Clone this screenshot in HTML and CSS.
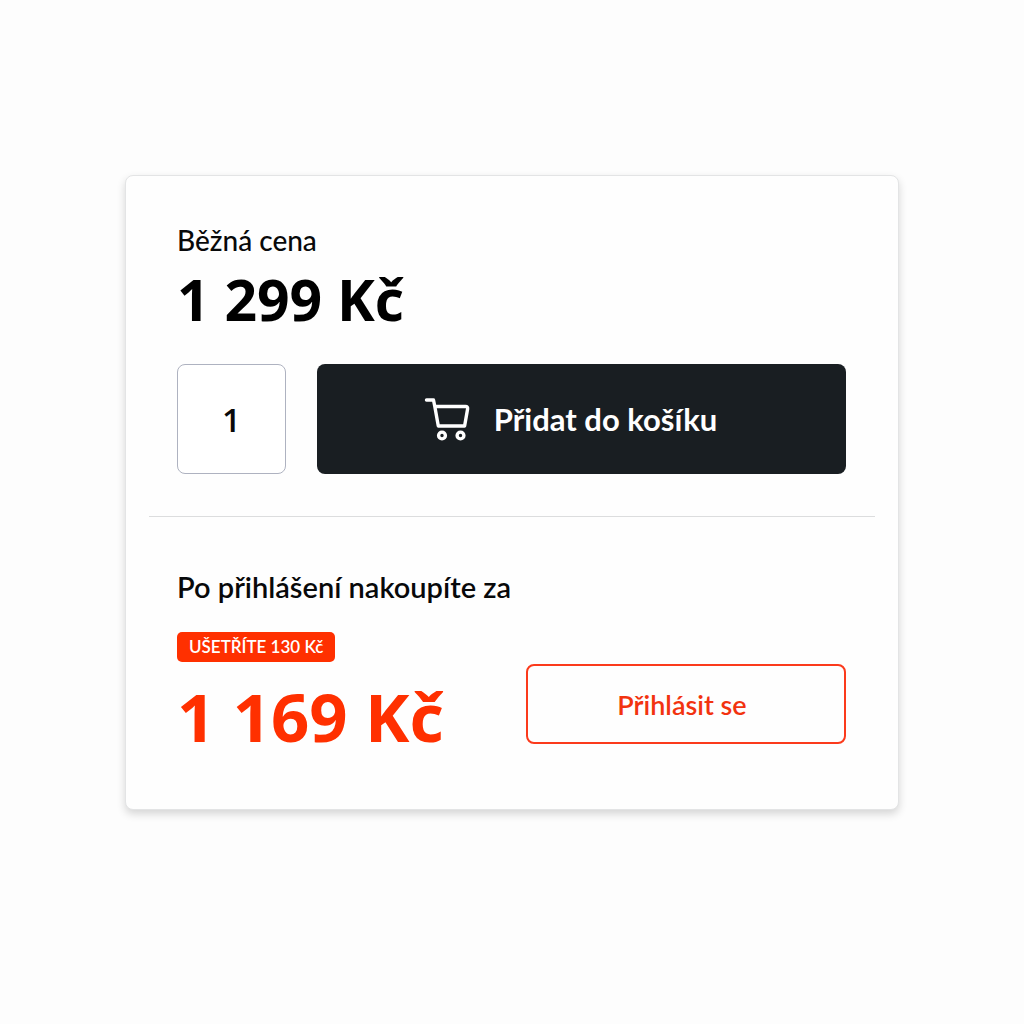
FILE: index.html
```html
<!DOCTYPE html>
<html lang="cs">
<head>
<meta charset="UTF-8">
<meta name="viewport" content="width=device-width, initial-scale=1.0">
<title>Cena</title>
<link rel="stylesheet" href="styles.css">
</head>
<body>
<div class="card">
    <div class="regular">
        <label class="label label-regular" for="quantity">Běžná cena</label>
        <div class="price">1 299 Kč</div>
        <div class="buy">
            <input class="quantity" id="quantity" type="text" inputmode="numeric" value="1">
            <button class="add" type="button">
                <svg class="cart" viewBox="0 0 46 46" fill="none" stroke="currentColor" stroke-width="3.4" stroke-linecap="round" stroke-linejoin="round">
                    <path d="M2.5 4H9.5L10.8 10.5M10.8 10.5H41.5Q44 10.5 43.6 13L40.6 30H14.3Z"/>
                    <circle cx="18" cy="39.5" r="3.4"/>
                    <circle cx="36.5" cy="39.5" r="3.4"/>
                </svg>
                <span>Přidat do košíku</span>
            </button>
        </div>
    </div>
    <hr class="divider">
    <div class="label">Po přihlášení nakoupíte za</div>
    <div class="member">
        <div class="offer">
            <span class="badge">UŠETŘÍTE 130 Kč</span>
            <div class="price price-member">1 169 Kč</div>
        </div>
        <button class="login" type="button">Přihlásit se</button>
    </div>
</div>
</body>
</html>
```
FILE: styles.css
```css
* {
    box-sizing: border-box;
}

body {
    margin: 0;
    padding: 175px 125px;
    background-color: #fdfdfd;
    color: #08090a;
    font-family: Lato, "Open Sans", sans-serif;
}

.card {
    padding: 48px 52px 65px 51px;
    background-color: #fefefe;
    border: 1px solid #e3e4e5;
    border-radius: 8px;
    box-shadow: 0 4px 8px rgba(0, 0, 0, 0.16);
}

.label {
    display: block;
    font-size: 29px;
    font-weight: 600;
    line-height: 32px;
}

.label-regular {
    font-size: 28px;
    font-weight: 500;
}

.price {
    margin-top: 19px;
    color: #000;
    font-family: "Open Sans", Lato, sans-serif;
    font-size: 57px;
    font-weight: 700;
    line-height: 48px;
    white-space: nowrap;
}

.buy {
    display: flex;
    gap: 31px;
    margin-top: 41px;
}

.quantity {
    width: 109px;
    height: 110px;
    padding: 0;
    background-color: #fff;
    border: 1px solid #aeb2c0;
    border-radius: 8px;
    color: inherit;
    font-family: "Open Sans", Lato, sans-serif;
    font-size: 33px;
    font-weight: 600;
    text-align: center;
}

.add {
    display: flex;
    flex: 1;
    align-items: center;
    justify-content: center;
    gap: 24px;
    height: 110px;
    padding: 0 22px 0 0;
    background-color: #191e22;
    border: 0;
    border-radius: 8px;
    color: #fff;
    font-family: inherit;
    font-size: 31px;
    font-weight: 700;
    cursor: pointer;
}

.cart {
    width: 46px;
    height: 46px;
}

.divider {
    height: 1px;
    margin: 42px -29px 54px -28px;
    background-color: #dcddde;
    border: 0;
}

.member {
    display: flex;
    align-items: flex-end;
    justify-content: space-between;
    margin-top: 29px;
}

.badge {
    display: inline-block;
    padding: 0 12px;
    background-color: #ff3000;
    border-radius: 5px;
    color: #fff;
    font-size: 17px;
    font-weight: 600;
    line-height: 30px;
    vertical-align: top;
}

.price-member {
    margin-top: 30px;
    padding-bottom: 4px;
    color: #ff3000;
    font-size: 67px;
}

.login {
    width: 320px;
    height: 80px;
    padding: 0 8px 0 0;
    background-color: transparent;
    border: 2px solid #fb3a1c;
    border-radius: 8px;
    color: #f2330f;
    font-family: inherit;
    font-size: 27px;
    font-weight: 600;
    cursor: pointer;
}
```
